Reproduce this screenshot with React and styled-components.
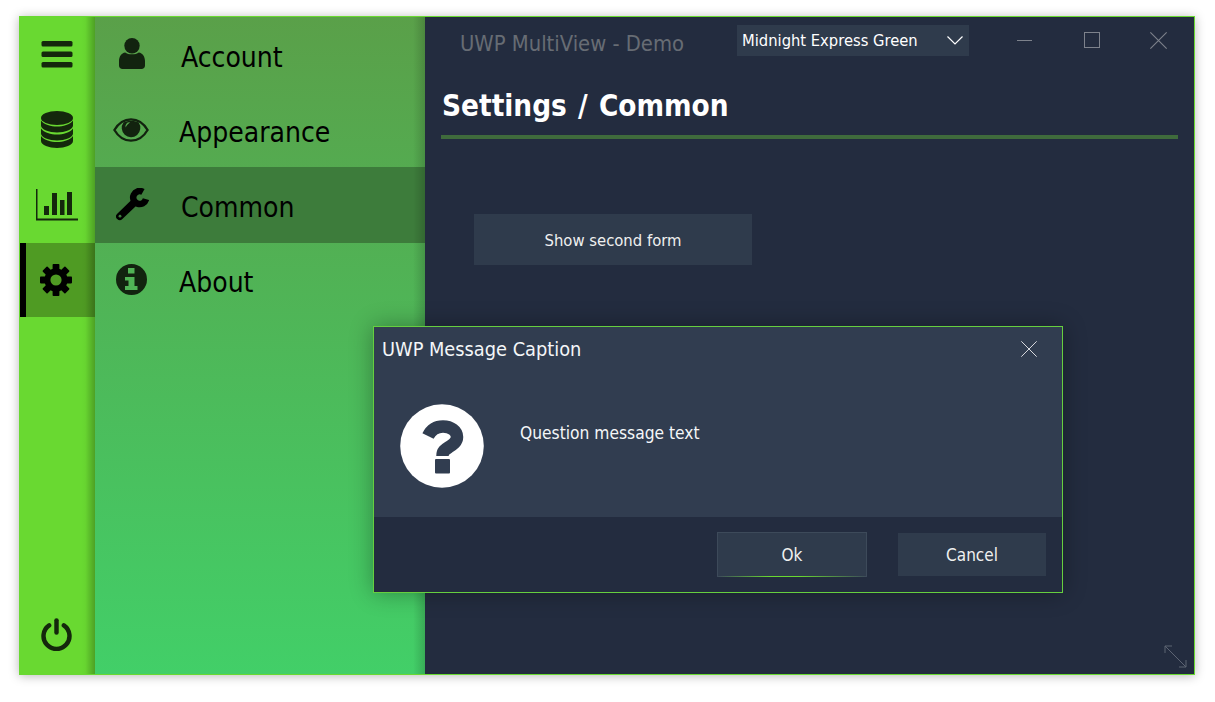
import React from 'react';
import styled, { createGlobalStyle } from 'styled-components';

const Global = createGlobalStyle`
  html, body { margin: 0; padding: 0; background: #fff; }
  body { font-family: "DejaVu Sans", "Noto Sans", sans-serif; font-stretch: condensed; }
`;

const Page = styled.div`
  width: 1215px;
  height: 702px;
  padding: 16px 0 0 19px;
  box-sizing: border-box;
  overflow: hidden;
`;

const Window = styled.div`
  position: relative;
  width: 1176px;
  height: 659px;
  box-sizing: border-box;
  border: 1px solid #69d931;
  border-left: 0;
  display: flex;
  box-shadow: 0 1px 10px rgba(0, 0, 0, 0.28);
  background: #232c3f;
`;

const Rail = styled.nav`
  position: relative;
  width: 76px;
  flex: none;
  background: #69d931;
  display: flex;
  flex-direction: column;
  &::after {
    content: '';
    position: absolute;
    top: 0;
    right: 0;
    bottom: 0;
    width: 14px;
    background: linear-gradient(to right, rgba(0, 0, 0, 0), rgba(0, 0, 0, 0.02) 30%, rgba(0, 0, 0, 0.26));
    pointer-events: none;
  }
`;

const RailItem = styled.div`
  height: ${p => p.$h}px;
  flex: none;
  box-sizing: border-box;
  display: flex;
  align-items: center;
  justify-content: center;
  color: ${p => (p.$active ? '#000' : '#14280c')};
  background: ${p => (p.$active ? '#4f9b23' : 'transparent')};
  border-left: ${p => (p.$active ? '6px solid #000' : '0')};
  padding-right: ${p => p.$pr || 0}px;
  margin-left: ${p => (p.$active ? '1px' : '0')};
  svg { display: block; }
`;

const RailSpacer = styled.div`
  flex: 1;
`;

const Panel = styled.div`
  position: relative;
  width: 330px;
  flex: none;
  background: linear-gradient(to bottom, #5aa049 0%, #42cf68 100%);
  display: flex;
  flex-direction: column;
  &::after {
    content: '';
    position: absolute;
    top: 0;
    right: 0;
    bottom: 0;
    width: 12px;
    background: linear-gradient(to right, rgba(0, 0, 0, 0), rgba(0, 0, 0, 0.16));
    pointer-events: none;
  }
`;

const PanelRow = styled.div`
  height: ${p => p.$h}px;
  flex: none;
  display: flex;
  align-items: center;
  background: ${p => (p.$active ? '#3d7c3b' : 'transparent')};
  color: #000;
`;

const PanelIcon = styled.div`
  width: ${p => p.$w}px;
  flex: none;
  box-sizing: border-box;
  display: flex;
  justify-content: center;
  padding-right: 12px;
  margin-top: ${p => p.$up}px;
  color: ${p => (p.$active ? '#000' : '#12230f')};
  svg { display: block; }
`;

const PanelLabel = styled.span`
  font-size: 28px;
  line-height: 40px;
  margin-top: 6px;
`;

const Main = styled.main`
  flex: 1;
  min-width: 0;
  display: flex;
  flex-direction: column;
  background: #232c3f;
`;

const TitleBar = styled.header`
  height: 56px;
  flex: none;
  display: flex;
  align-items: flex-start;
  padding-left: 35px;
`;

const AppTitle = styled.div`
  width: 277px;
  flex: none;
  font-size: 21.8px;
  line-height: 30px;
  margin-top: 12px;
  color: #676c74;
`;

const Combo = styled.div`
  width: 232px;
  height: 31px;
  flex: none;
  margin-top: 8px;
  padding: 0 6px 0 5px;
  box-sizing: border-box;
  display: flex;
  align-items: center;
  justify-content: space-between;
  background: #2f3b4c;
  color: #fff;
  font-size: 16.4px;
`;

const WindowButtons = styled.div`
  display: flex;
  margin-left: 22px;
  margin-top: 8px;
`;

const WindowButton = styled.div`
  width: 67px;
  height: 30px;
  display: flex;
  align-items: center;
  justify-content: center;
  color: #7d828c;
  svg { display: block; }
`;

const Heading = styled.h1`
  margin: 0 16px 0 16px;
  height: 66px;
  box-sizing: border-box;
  border-bottom: 4px solid #3f6b3c;
  padding: 13px 0 0 1px;
  font-size: 29.4px;
  line-height: 40px;
  font-weight: 700;
  word-spacing: 2px;
  color: #fff;
`;

const Content = styled.section`
  padding: 75px 0 0 49px;
`;

const PlainButton = styled.div`
  width: ${p => p.$w}px;
  height: ${p => p.$h}px;
  box-sizing: border-box;
  display: flex;
  align-items: center;
  justify-content: center;
  background: #2f3b4c;
  color: #f0f0f0;
  font-size: ${p => p.$size}px;
`;

const FormButtonLabel = styled.span`
  margin-top: 1px;
`;

const DefaultButton = styled(PlainButton)`
  position: relative;
  border: 1px solid #3d4a5a;
  &::after {
    content: '';
    position: absolute;
    left: 0;
    right: 0;
    bottom: -1px;
    height: 1px;
    background: linear-gradient(to right, rgba(105, 217, 49, 0), #69d931 35%, #69d931 55%, rgba(105, 217, 49, 0));
  }
`;

const Dialog = styled.div`
  position: absolute;
  left: 354px;
  top: 309px;
  width: 690px;
  height: 267px;
  box-sizing: border-box;
  border: 1px solid #66cf3f;
  display: flex;
  flex-direction: column;
  background: #232c3f;
  box-shadow: 0 0 22px rgba(0, 0, 0, 0.32);
  color: #fff;
`;

const DialogTop = styled.div`
  height: 190px;
  flex: none;
  background: #313d50;
  display: flex;
  flex-direction: column;
`;

const DialogCaption = styled.div`
  height: 45px;
  flex: none;
  display: flex;
  align-items: center;
  justify-content: space-between;
  padding: 0 25px 0 8px;
  font-size: 19.8px;
  color: #f4f6f8;
  svg { display: block; color: #d8dade; margin-top: -1px; }
`;

const DialogBody = styled.div`
  display: flex;
  align-items: flex-start;
  padding: 32px 0 0 26px;
`;

const DialogText = styled.div`
  margin: 17px 0 0 36px;
  font-size: 17.25px;
  line-height: 24px;
  color: #f4f6f8;
`;

const DialogFooter = styled.div`
  flex: 1;
  display: flex;
  align-items: center;
  justify-content: flex-end;
  gap: 31px;
  padding: 0 16px 0 0;
`;

const Grip = styled.svg`
  position: absolute;
  right: 7px;
  bottom: 6px;
  display: block;
`;

function Bars() {
  return (
    <svg width="32" height="27" viewBox="0 0 32 27" fill="currentColor">
      <rect x="0.5" y="0" width="31" height="5.5" rx="1.5" />
      <rect x="0.5" y="10.5" width="31" height="5.5" rx="1.5" />
      <rect x="0.5" y="21" width="31" height="5.5" rx="1.5" />
    </svg>
  );
}

function Database() {
  const band = 'M0 0C3 4 10 6 16 6S29 4 32 0V5C32 9 24 12 16 12S0 9 0 5Z';
  return (
    <svg width="32" height="37" viewBox="0 0 32 37" fill="currentColor">
      <ellipse cx="16" cy="7" rx="16" ry="7" />
      <path d={band} transform="translate(0 9.5)" />
      <path d={band} transform="translate(0 17.5)" />
      <path d={band} transform="translate(0 25)" />
    </svg>
  );
}

function Chart() {
  return (
    <svg width="42" height="32" viewBox="0 0 42 32" fill="currentColor">
      <path d="M0 0H1.5V29.5H42V31.5H0Z" />
      <rect x="8" y="17" width="5" height="9" />
      <rect x="16" y="4" width="5" height="22" />
      <rect x="24" y="11" width="4.5" height="15" />
      <rect x="31" y="3" width="5" height="23" />
    </svg>
  );
}

function Cog() {
  const teeth = [0, 45, 90, 135, 180, 225, 270, 315];
  return (
    <svg width="32" height="32" viewBox="0 0 32 32" fill="currentColor">
      <circle cx="16" cy="16" r="8.6" fill="none" stroke="currentColor" strokeWidth="6" />
      {teeth.map(a => (
        <rect key={a} x="12.6" y="0" width="6.8" height="8" rx="0.8" transform={`rotate(${a} 16 16)`} />
      ))}
    </svg>
  );
}

function Power() {
  return (
    <svg width="31" height="33" viewBox="0 0 32 34" fill="none" stroke="currentColor" strokeWidth="4.6" strokeLinecap="round">
      <path d="M8.4 7.5A13.4 13.4 0 1 0 23.6 7.5" />
      <path d="M16 2.4V15" />
    </svg>
  );
}

function User() {
  return (
    <svg width="26" height="31" viewBox="0 0 26 31" fill="currentColor">
      <circle cx="13" cy="7.7" r="7.7" />
      <path d="M6.2 14.4C9 17 17 17 19.8 14.4C23.5 15 26 18.5 26 23V27.5C26 29.5 24.5 31 22.5 31H3.5C1.5 31 0 29.5 0 27.5V23C0 18.5 2.5 15 6.2 14.4Z" />
    </svg>
  );
}

function Eye() {
  return (
    <svg width="36" height="24" viewBox="0 0 36 24">
      <path d="M1.4 12C5.5 5 11 1.3 18 1.3S30.5 5 34.6 12C30.5 19 25 22.7 18 22.7S5.5 19 1.4 12Z" fill="none" stroke="currentColor" strokeWidth="2.3" />
      <path d="M10.5 4.4A9.3 9.3 0 1 0 25.7 4.6C23 3.4 20.5 2.8 18 2.8C15.5 2.8 13 3.3 10.5 4.4Z" fill="currentColor" />
      <path d="M17 4.4A4 4 0 0 0 12.6 9.5C14 6.8 15.2 5.5 17 4.4Z" fill="#57a84f" />
    </svg>
  );
}

function Wrench() {
  return (
    <svg width="33" height="33" viewBox="0.8 0 33 33">
      <path d="M27.75 3.87A6.5 6.5 0 1 0 30.78 11.18" fill="none" stroke="currentColor" strokeWidth="6.5" />
      <path d="M18 15.5L4.6 28.4" fill="none" stroke="currentColor" strokeWidth="7.4" strokeLinecap="round" />
      <circle cx="4.8" cy="28.2" r="1.4" fill="#3d7c3b" />
    </svg>
  );
}

function Info() {
  return (
    <svg width="31" height="31" viewBox="0 0 31 31" fill="currentColor">
      <path
        fillRule="evenodd"
        d="M15.5 0A15.5 15.5 0 1 0 15.5 31A15.5 15.5 0 1 0 15.5 0ZM12 4H18.5V9.5H12ZM9 13H18.5V22H21.5V26H9V22H12.5V16.5H9Z"
      />
    </svg>
  );
}

function Question() {
  return (
    <svg width="84" height="84" viewBox="0 0 84 84">
      <circle cx="42" cy="42" r="41.8" fill="#fff" />
      <path d="M28 32C31 26 36 22.5 43 22.5C51 22.5 57 27 57 33C57 38 53 40.5 49 43C45 45.5 42.5 47 42.5 52" fill="none" stroke="#313d50" strokeWidth="12.5" />
      <rect x="35" y="55" width="15" height="14.5" rx="1" fill="#313d50" />
    </svg>
  );
}

function Cross({ size = 16, w = 1 }) {
  return (
    <svg width={size} height={size} viewBox="0 0 16 16" fill="none" stroke="currentColor" strokeWidth={w}>
      <path d="M0.3 0.3L15.7 15.7M15.7 0.3L0.3 15.7" />
    </svg>
  );
}

const panelRows = [
  { label: 'Account', icon: <User />, w: 86, h: 75, up: -2 },
  { label: 'Appearance', icon: <Eye />, w: 84, h: 75, up: 0 },
  { label: 'Common', icon: <Wrench />, w: 86, h: 76, up: -1, active: true },
  { label: 'About', icon: <Info />, w: 84, h: 74, up: -1 },
];

export default function App() {
  return (
    <Page>
      <Global />
      <Window>
        <Rail>
          <RailItem $h={75}><Bars /></RailItem>
          <RailItem $h={75}><Database /></RailItem>
          <RailItem $h={76}><Chart /></RailItem>
          <RailItem $h={74} $active $pr={9}><Cog /></RailItem>
          <RailSpacer />
          <RailItem $h={80} $pr={2}><Power /></RailItem>
        </Rail>
        <Panel>
          {panelRows.map(r => (
            <PanelRow key={r.label} $h={r.h} $active={r.active}>
              <PanelIcon $w={r.w} $up={r.up} $active={r.active}>{r.icon}</PanelIcon>
              <PanelLabel>{r.label}</PanelLabel>
            </PanelRow>
          ))}
        </Panel>
        <Main>
          <TitleBar>
            <AppTitle>UWP MultiView - Demo</AppTitle>
            <Combo>
              <span>Midnight Express Green</span>
              <svg width="16" height="9" viewBox="0 0 16 9" fill="none" stroke="#fff" strokeWidth="1.2">
                <path d="M0.5 0.5L8 8L15.5 0.5" />
              </svg>
            </Combo>
            <WindowButtons>
              <WindowButton>
                <svg width="15" height="1" viewBox="0 0 15 1"><rect width="15" height="1" fill="currentColor" /></svg>
              </WindowButton>
              <WindowButton>
                <svg width="16" height="16" viewBox="0 0 16 16" fill="none" stroke="currentColor"><rect x="0.5" y="0.5" width="15" height="15" /></svg>
              </WindowButton>
              <WindowButton><Cross size={17} /></WindowButton>
            </WindowButtons>
          </TitleBar>
          <Heading>Settings / Common</Heading>
          <Content>
            <PlainButton $w={278} $h={51} $size={16.5}>
              <FormButtonLabel>Show second form</FormButtonLabel>
            </PlainButton>
          </Content>
        </Main>
        <Dialog>
          <DialogTop>
            <DialogCaption>
              <span>UWP Message Caption</span>
              <Cross size={16} />
            </DialogCaption>
            <DialogBody>
              <Question />
              <DialogText>Question message text</DialogText>
            </DialogBody>
          </DialogTop>
          <DialogFooter>
            <DefaultButton $w={150} $h={45} $size={17}>Ok</DefaultButton>
            <PlainButton $w={148} $h={43} $size={17}>Cancel</PlainButton>
          </DialogFooter>
        </Dialog>
        <Grip width="23" height="23" viewBox="0 0 23 23" fill="none" stroke="#5d6473">
          <path d="M1 8V1H8M1 1L22 22M15 22H22V15" />
        </Grip>
      </Window>
    </Page>
  );
}
